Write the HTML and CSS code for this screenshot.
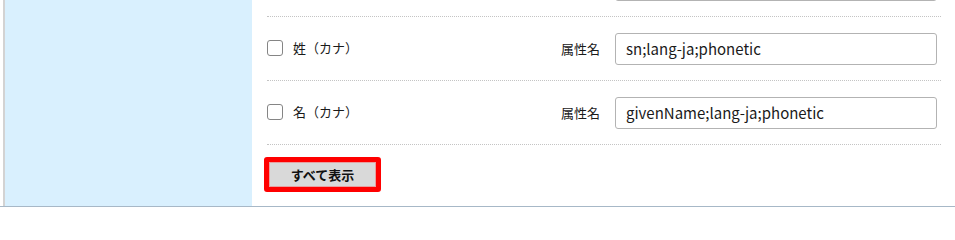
FILE: index.html
```html
<!DOCTYPE html>
<html lang="ja">
<head>
<meta charset="utf-8">
<title>属性設定</title>
<link rel="stylesheet" href="styles.css">
</head>
<body>
<div class="page">
  <aside class="side"></aside>
  <main class="main">
    <div class="row row-cut">
      <input class="field field-end" type="text" value="">
    </div>
    <div class="row">
      <label class="check"><span class="box"></span><span class="check-text">姓（カナ）</span></label>
      <span class="attr">属性名</span>
      <input class="field" type="text" value="sn;lang-ja;phonetic">
    </div>
    <div class="row">
      <label class="check"><span class="box"></span><span class="check-text">名（カナ）</span></label>
      <span class="attr">属性名</span>
      <input class="field" type="text" value="givenName;lang-ja;phonetic">
    </div>
    <div class="actions">
      <span class="highlight"><button class="btn" type="button">すべて表示</button></span>
    </div>
  </main>
</div>
</body>
</html>
```
FILE: styles.css
```css
html, body {
  margin: 0;
  padding: 0;
  background: #ffffff;
}
body {
  font-family: "Noto Sans CJK JP", "Noto Sans", sans-serif;
  color: #1a1a1a;
  overflow: hidden;
}
.page {
  display: flex;
  height: 206px;
  padding-left: 3px;
  border-bottom: 1px solid #a7b8c7;
  overflow: hidden;
}
.side {
  width: 247px;
  flex: none;
  background: #d9f0fe;
  border-left: 2px solid #d3d3d3;
}
.main {
  flex: 1;
  padding-left: 15px;
  padding-right: 14px;
  display: flex;
  flex-direction: column;
}
.row {
  display: flex;
  align-items: center;
  height: 63px;
  flex: none;
  border-bottom: 1px dotted #c4c4c4;
  padding-right: 4px;
  box-sizing: content-box;
}
.row-cut {
  margin-top: -47px;
}
.check {
  display: flex;
  align-items: center;
  gap: 10px;
  font-size: 13px;
  margin-top: -2px;
}
.box {
  width: 14px;
  height: 14px;
  border: 1px solid #858585;
  border-radius: 3px;
  background: #fff;
}
.check-text {
  line-height: 18px;
}
.attr {
  margin-left: auto;
  font-size: 13px;
  margin-right: 15px;
}
.field {
  width: 322px;
  height: 32px;
  box-sizing: border-box;
  border: 1px solid #b3b3b3;
  border-radius: 3px;
  padding: 0 10px;
  font-family: "Noto Sans CJK JP", "Noto Sans", sans-serif;
  font-size: 15px;
  color: #1a1a1a;
  background: #fff;
}
.field-end {
  margin-left: auto;
}
.actions {
  padding-top: 12px;
}
.highlight {
  display: inline-block;
  border: 5px solid #ff0000;
  border-radius: 3px;
  margin-left: -3px;
}
.btn {
  display: block;
  width: 107px;
  height: 25px;
  margin: 0;
  padding: 0;
  border: 1px solid #e8a0a0;
  background: #d9d9d9;
  font-family: "Noto Sans CJK JP", "Noto Sans", sans-serif;
  font-size: 13px;
  font-weight: bold;
  color: #111;
}
```
